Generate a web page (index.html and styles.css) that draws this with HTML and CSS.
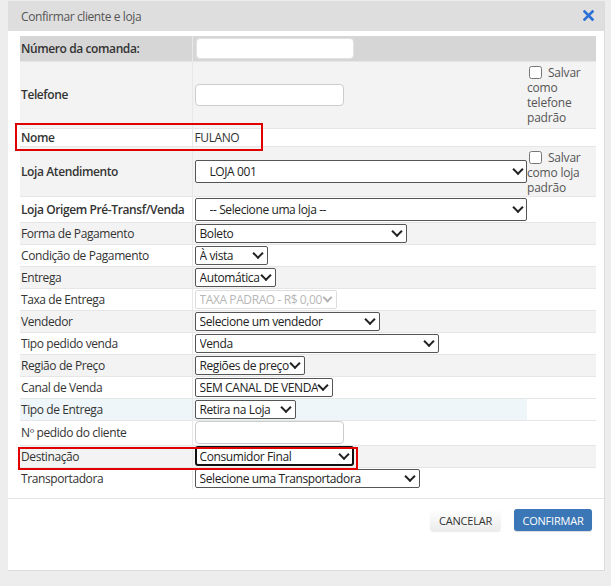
FILE: index.html
```html
<!DOCTYPE html>
<html lang="pt-BR">
<head>
    <meta charset="UTF-8">
    <title>Confirmar cliente e loja</title>
    <link rel="stylesheet" href="styles.css">
</head>
<body>
    <div class="backdrop">
        <div class="modal">
            <div class="modal-header">
                <span class="modal-title">Confirmar cliente e loja</span>
                <svg class="close" width="11" height="11" viewBox="0 0 11 11">
                    <path d="M1.5 1.5 L9.5 9.5 M9.5 1.5 L1.5 9.5" stroke="#2b6fd6" stroke-width="2.6" stroke-linecap="square"/>
                </svg>
            </div>

            <div class="modal-body">
                <table class="form-table">
                    <tr class="row-head">
                        <td class="lbl strong">Número da comanda:</td>
                        <td><input type="text" class="inp inp-comanda"></td>
                        <td></td>
                    </tr>
                    <tr class="row-tel">
                        <td class="lbl strong">Telefone</td>
                        <td><input type="text" class="inp inp-tel"></td>
                        <td class="save-cell"><input type="checkbox" class="chk"> Salvar como telefone padrão</td>
                    </tr>
                    <tr class="row-nome">
                        <td class="lbl strong">Nome</td>
                        <td class="val">FULANO</td>
                        <td></td>
                    </tr>
                    <tr class="row-loja">
                        <td class="lbl strong">Loja Atendimento</td>
                        <td><span class="dd dd-big w-full"><select class="sel"><option>LOJA 001</option></select></span></td>
                        <td class="save-cell"><input type="checkbox" class="chk"> Salvar como loja padrão</td>
                    </tr>
                    <tr class="row-origem">
                        <td class="lbl strong">Loja Origem Pré-Transf/Venda</td>
                        <td><span class="dd dd-big w-full"><select class="sel"><option>-- Selecione uma loja --</option></select></span></td>
                        <td></td>
                    </tr>
                    <tr>
                        <td class="lbl">Forma de Pagamento</td>
                        <td><span class="dd w-forma"><select class="sel"><option>Boleto</option></select></span></td>
                        <td></td>
                    </tr>
                    <tr>
                        <td class="lbl">Condição de Pagamento</td>
                        <td><span class="dd w-cond"><select class="sel"><option>À vista</option></select></span></td>
                        <td></td>
                    </tr>
                    <tr>
                        <td class="lbl">Entrega</td>
                        <td><span class="dd w-entrega"><select class="sel"><option>Automática</option></select></span></td>
                        <td></td>
                    </tr>
                    <tr>
                        <td class="lbl">Taxa de Entrega</td>
                        <td><span class="dd dd-off w-taxa"><select class="sel" disabled><option>TAXA PADRAO - R$ 0,00</option></select></span></td>
                        <td></td>
                    </tr>
                    <tr>
                        <td class="lbl">Vendedor</td>
                        <td><span class="dd w-vend"><select class="sel"><option>Selecione um vendedor</option></select></span></td>
                        <td></td>
                    </tr>
                    <tr>
                        <td class="lbl">Tipo pedido venda</td>
                        <td><span class="dd w-tipo"><select class="sel"><option>Venda</option></select></span></td>
                        <td></td>
                    </tr>
                    <tr>
                        <td class="lbl">Região de Preço</td>
                        <td><span class="dd w-regiao"><select class="sel"><option>Regiões de preço</option></select></span></td>
                        <td></td>
                    </tr>
                    <tr>
                        <td class="lbl">Canal de Venda</td>
                        <td><span class="dd w-canal"><select class="sel"><option>SEM CANAL DE VENDA</option></select></span></td>
                        <td></td>
                    </tr>
                    <tr class="row-hover">
                        <td class="lbl">Tipo de Entrega</td>
                        <td><span class="dd w-tipoent"><select class="sel"><option>Retira na Loja</option></select></span></td>
                        <td></td>
                    </tr>
                    <tr class="row-pedido">
                        <td class="lbl">Nº pedido do cliente</td>
                        <td><input type="text" class="inp inp-pedido"></td>
                        <td></td>
                    </tr>
                    <tr>
                        <td class="lbl">Destinação</td>
                        <td><span class="dd dd-focus w-dest"><select class="sel"><option>Consumidor Final</option></select></span></td>
                        <td></td>
                    </tr>
                    <tr>
                        <td class="lbl">Transportadora</td>
                        <td><span class="dd w-transp"><select class="sel"><option>Selecione uma Transportadora</option></select></span></td>
                        <td></td>
                    </tr>
                </table>
            </div>

            <div class="modal-footer">
                <button class="btn btn-cancel">CANCELAR</button>
                <button class="btn btn-ok">CONFIRMAR</button>
            </div>

            <!-- marcações -->
            <div class="mark mark-nome"></div>
            <div class="mark mark-dest"></div>
        </div>
    </div>
</body>
</html>
```

FILE: styles.css
```css
* {
    margin: 0;
    padding: 0;
    box-sizing: border-box;
}

body {
    font-family: "Open Sans", "Noto Sans", sans-serif;
    font-size: 12px;
    letter-spacing: -0.4px;
    color: #333;
    background: #ededed;
    width: 611px;
    height: 586px;
    overflow: hidden;
}

.backdrop {
    padding: 1px 7px 0 8px;
}

.modal {
    position: relative;
    width: 597px;
    height: 570px;
    background: #fff;
    border-right: 1px solid #dcdcdc;
    border-bottom: 1px solid #dcdcdc;
    display: flex;
    flex-direction: column;
}

.modal-header {
    height: 30px;
    background: #dedede;
    display: flex;
    align-items: center;
    justify-content: space-between;
    padding: 0 10px 0 13px;
}

.modal-title {
    color: #555;
}

.close {
    display: block;
    margin-top: -1px;
}

.modal-body {
    padding: 5px 9px 0 12px;
}

.form-table {
    width: 576px;
    border-collapse: collapse;
    table-layout: fixed;
}

.form-table td {
    border-top: 1px solid #e6e6e6;
    height: 22px;
    padding: 0 2px;
    vertical-align: middle;
}

.form-table td:first-child {
    width: 172px;
    padding-left: 1px;
    border-right: 1px solid #e8e8e8;
}

.form-table td:nth-child(2) {
    width: 335px;
}

.form-table td:nth-child(3) {
    width: 69px;
    padding: 0;
}

.form-table tr:nth-child(even) {
    background: #f3f3f3;
}

.form-table tr.row-head {
    background: #d6d6d6;
}

.form-table tr.row-head td {
    height: 25px;
    border-top: none;
}

.row-tel td {
    height: 67px;
}

.row-nome td {
    height: 18px;
}

.row-loja td {
    height: 50px;
}

.row-origem td {
    height: 26px;
}

.row-pedido td {
    height: 25px;
}

.row-hover td:nth-child(1),
.row-hover td:nth-child(2) {
    background: #eef6f9;
}

.row-hover td:nth-child(3) {
    background: #fff;
}

.lbl {
    color: #333;
    white-space: nowrap;
}

.lbl.strong {
    font-weight: 600;
}

.val {
    color: #333;
}

.save-cell {
    line-height: 15px;
    color: #555;
    letter-spacing: -0.2px;
    vertical-align: top !important;
}

.row-tel .save-cell,
.row-loja .save-cell {
    padding-top: 3px !important;
}

.chk {
    width: 13px;
    height: 13px;
    margin: 0 3px 0 2px;
    vertical-align: -2px;
}

.inp {
    display: block;
    height: 22px;
    border: 1px solid #ccc;
    border-radius: 4px;
    background: #fff;
    font-family: inherit;
}

.inp-comanda {
    width: 158px;
    height: 21px;
    margin-left: 1px;
    border-color: #e2e2e2;
}

.inp-tel {
    width: 149px;
}

.inp-pedido {
    width: 149px;
    height: 23px;
}

/* select com seta desenhada */
.dd {
    position: relative;
    display: block;
    height: 19px;
}

.dd::after {
    content: "";
    position: absolute;
    right: 6px;
    top: 50%;
    width: 6px;
    height: 6px;
    border-right: 2px solid #222;
    border-bottom: 2px solid #222;
    transform: translateY(-70%) rotate(45deg);
    pointer-events: none;
}

.sel {
    -webkit-appearance: none;
    appearance: none;
    display: block;
    width: 100%;
    height: 100%;
    border: 1px solid #555;
    border-radius: 2px;
    background: #fff;
    font-family: "Open Sans", "Noto Sans", sans-serif;
    font-size: 12px;
    letter-spacing: -0.4px;
    color: #222;
    padding: 0 14px 0 4px;
    outline: none;
}

.dd-big {
    height: 23px;
}

.dd-big .sel {
    padding-left: 14px;
}

.dd-big::after {
    right: 5px;
}

.dd-off .sel {
    border-color: #d0d0d0;
    color: #999;
}

.dd-off::after {
    border-color: #b0b0b0;
    width: 5px;
    height: 5px;
}

.dd-focus {
    height: 20px;
}

.dd-focus .sel {
    border: 2px solid #111;
    border-radius: 3px;
    padding-left: 3px;
}

.w-full { width: 332px; }
.w-forma { width: 212px; }
.w-cond { width: 73px; }
.w-entrega { width: 81px; }
.w-taxa { width: 142px; }
.w-vend { width: 185px; }
.w-tipo { width: 244px; }
.w-regiao { width: 110px; }
.w-canal { width: 138px; }
.w-tipoent { width: 101px; }
.w-dest { width: 159px; }
.w-transp { width: 225px; }

.modal-footer {
    margin-top: 9px;
    border-top: 1px solid #e6e6e6;
    display: flex;
    justify-content: flex-end;
    gap: 13px;
    padding: 10px 12px 0 0;
}

.btn {
    height: 22px;
    border: none;
    border-radius: 3px;
    font-family: "Open Sans", "Noto Sans", sans-serif;
    font-size: 11px;
    letter-spacing: -0.2px;
    cursor: pointer;
}

.btn-cancel {
    width: 71px;
    color: #333;
    background: linear-gradient(#ffffff, #ececec);
    box-shadow: 0 1px 1px rgba(0, 0, 0, 0.08);
}

.btn-ok {
    width: 78px;
    color: #fff;
    background: #3b76b6;
    box-shadow: 0 1px 1px rgba(0, 0, 0, 0.15);
}

.mark {
    position: absolute;
    border: 2px solid #e00000;
}

.mark-nome {
    left: 7px;
    top: 122px;
    width: 248px;
    height: 28px;
}

.mark-dest {
    left: 10px;
    top: 446px;
    width: 340px;
    height: 23px;
}
```
